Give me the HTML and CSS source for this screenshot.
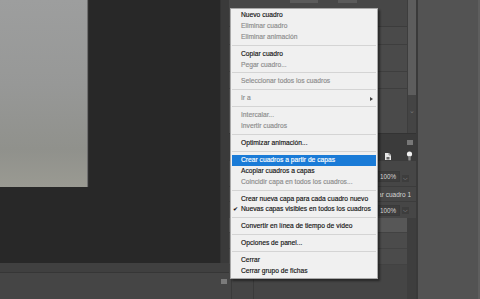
FILE: index.html
```html
<!DOCTYPE html>
<html lang="es">
<head>
    <meta charset="UTF-8">
    <meta name="viewport" content="width=device-width, initial-scale=1.0">
    <title>Línea de tiempo - menú</title>
    <link rel="stylesheet" href="styles.css">
</head>
<body>
    <div class="app">
        <!-- documento -->
        <div class="workspace">
            <div class="main">
                <div class="canvas">
                    <div class="photo"></div>
                </div>
                <div class="gutter"></div>
            </div>
            <div class="statusbar"></div>
            <div class="timeline">
                <span class="tl-square"></span>
            </div>
        </div>

        <!-- paneles -->
        <div class="panel">
            <div class="frames-panel">
                <div class="frames-list">
                    <div class="frames-top">
                        <span class="tab-btn tb1"></span>
                        <span class="tab-btn tb2"></span>
                    </div>
                    <div class="frame-row r1"></div>
                    <div class="frame-row r2"></div>
                    <div class="frame-row r3"></div>
                    <div class="frame-row r4"></div>
                </div>
                <div class="scroll">
                    <div class="scroll-thumb"></div>
                    <div class="scroll-track">
                        <span class="scroll-arrow">⌄</span>
                    </div>
                </div>
            </div>

            <div class="layers-panel">
                <div class="layers-head">
                    <span class="menu-ico"></span>
                    <div class="head-icons">
                        <svg class="ico-lock" width="8" height="9" viewBox="0 0 8 9">
                            <path d="M1 1h4l2 2v5H1z" fill="#e6e6e6"/>
                            <path d="M5 1v2h2" fill="none" stroke="#777" stroke-width="0.8"/>
                            <rect x="2.5" y="5" width="3" height="2.5" fill="#666"/>
                        </svg>
                        <svg class="ico-pin" width="7" height="10" viewBox="0 0 7 10">
                            <circle cx="3.5" cy="3" r="2.6" fill="#f2f2f2"/>
                            <rect x="2.3" y="5" width="2.4" height="4.5" rx="0.6" fill="#8a8a8a"/>
                        </svg>
                    </div>
                </div>
                <div class="opt-row opacity">
                    <span class="pct">100%</span><span class="drop">⌵</span>
                </div>
                <div class="opt-row propagate">
                    <span class="clip">Propagar cuadro 1</span>
                </div>
                <div class="opt-row fill">
                    <span class="pct">100%</span><span class="drop">⌵</span>
                </div>
                <div class="layers-body">
                    <div class="layers-list">
                        <div class="layer-row active"></div>
                        <div class="layer-row"></div>
                        <div class="layer-row"></div>
                    </div>
                    <div class="layers-side"></div>
                </div>
            </div>
        </div>

        <div class="dock"></div>
    </div>

    <!-- menú contextual del panel -->
    <div class="ctx-menu">
        <div class="item">Nuevo cuadro</div>
        <div class="item off">Eliminar cuadro</div>
        <div class="item off">Eliminar animación</div>
        <div class="sep"></div>
        <div class="item">Copiar cuadro</div>
        <div class="item off">Pegar cuadro...</div>
        <div class="sep"></div>
        <div class="item off">Seleccionar todos los cuadros</div>
        <div class="sep"></div>
        <div class="item off sub">Ir a <span class="arrow"></span></div>
        <div class="sep"></div>
        <div class="item off">Intercalar...</div>
        <div class="item off">Invertir cuadros</div>
        <div class="sep"></div>
        <div class="item">Optimizar animación...</div>
        <div class="sep"></div>
        <div class="item hover">Crear cuadros a partir de capas</div>
        <div class="item">Acoplar cuadros a capas</div>
        <div class="item off">Coincidir capa en todos los cuadros...</div>
        <div class="sep"></div>
        <div class="item">Crear nueva capa para cada cuadro nuevo</div>
        <div class="item checked"><span class="check">✔</span>Nuevas capas visibles en todos los cuadros</div>
        <div class="sep"></div>
        <div class="item">Convertir en línea de tiempo de vídeo</div>
        <div class="sep"></div>
        <div class="item">Opciones de panel...</div>
        <div class="sep"></div>
        <div class="item">Cerrar</div>
        <div class="item">Cerrar grupo de fichas</div>
    </div>
</body>
</html>
```

FILE: styles.css
```css
* {
    box-sizing: border-box;
}

body {
    margin: 0;
    width: 480px;
    height: 299px;
    overflow: hidden;
    background: #282828;
    font-family: 'Liberation Sans', Arial, sans-serif;
}

.app {
    display: flex;
    width: 480px;
    height: 299px;
}

/* zona del documento */
.workspace {
    width: 229px;
    display: flex;
    flex-direction: column;
}

.main {
    flex: 1;
    display: flex;
}

.canvas {
    width: 220px;
    background: #282828;
}

.photo {
    width: 88px;
    height: 187px;
    background: linear-gradient(180deg, #9d9e9e 0%, #979897 45%, #90918c 80%, #9a9a92 100%);
    border-right: 1px solid #6f6f6f;
    box-shadow: 1px 0 0 #303030;
}

.gutter {
    flex: 1;
    background: #3a3a3a;
    border-left: 1px solid #333;
}

.statusbar {
    height: 9px;
    background: #404040;
}

.timeline {
    height: 27px;
    background: #454545;
    border-top: 1px solid #363636;
    display: flex;
    justify-content: flex-end;
    padding: 6px 2px 0 0;
}

.tl-square {
    width: 6px;
    height: 5px;
    background: #7a7a7a;
}

/* paneles de la derecha */
.panel {
    width: 187px;
    display: flex;
    flex-direction: column;
    background: #464646;
}

.frames-panel {
    height: 133px;
    display: flex;
}

.frames-list {
    flex: 1;
    display: flex;
    flex-direction: column;
    background: #4a4a4a;
}

.frames-top {
    height: 27px;
    border-bottom: 1px solid #3c3c3c;
    position: relative;
    background: #474747;
}

.tab-btn {
    position: absolute;
    top: 0;
    height: 3px;
    background: #5a5a5a;
}

.tb1 { left: 61px; width: 28px; }
.tb2 { left: 109px; width: 19px; }

.frame-row {
    border-bottom: 1px solid #3e3e3e;
}

.r1 { height: 18px; }
.r2 { height: 27px; }
.r3 { height: 17px; }
.r4 { flex: 1; border-bottom: none; }

.scroll {
    width: 9px;
    display: flex;
    flex-direction: column;
    background: #444;
    border-left: 1px solid #3d3d3d;
}

.scroll-thumb {
    height: 95px;
    background: #5d5d5d;
}

.scroll-track {
    flex: 1;
    display: flex;
    justify-content: center;
    padding-top: 12px;
}

.scroll-arrow {
    color: #777;
    font-size: 7px;
    line-height: 7px;
}

.layers-panel {
    flex: 1;
    display: flex;
    flex-direction: column;
    border-top: 1px solid #333;
}

.layers-head {
    height: 27px;
    background: #3b3b3b;
    display: flex;
    flex-direction: column;
    align-items: flex-end;
    justify-content: space-between;
    padding: 6px 3px 0 0;
}

.menu-ico {
    width: 6px;
    height: 5px;
    background: #777;
}

.head-icons {
    display: flex;
    align-items: flex-end;
    gap: 14px;
}

.opt-row {
    display: flex;
    align-items: center;
    justify-content: flex-end;
    padding-right: 7px;
    border-bottom: 1px solid #3c3c3c;
    color: #d6d6d6;
    font-size: 6.3px;
}

.opacity {
    height: 26px;
    align-items: flex-end;
    padding-bottom: 4px;
}

.propagate {
    height: 15px;
    padding-right: 5px;
}

.fill {
    height: 16px;
    border-bottom: none;
}

.clip {
    width: 31px;
    overflow: hidden;
    white-space: nowrap;
    direction: rtl;
    font-size: 6.5px;
}

.pct {
    background: #3d3d3d;
    padding: 1px 3px;
    border: 1px solid #3a3a3a;
}

.drop {
    width: 7px;
    margin-left: 2px;
    text-align: center;
    color: #aaa;
    background: #3d3d3d;
    font-size: 6px;
}

.layers-body {
    flex: 1;
    display: flex;
}

/* columnas de visibilidad y miniatura */
.layers-list {
    flex: 1;
    display: flex;
    flex-direction: column;
    background:
        linear-gradient(#3a3a3a, #3a3a3a) 2px 0 / 1px 100% no-repeat,
        linear-gradient(#3a3a3a, #3a3a3a) 24px 0 / 1px 100% no-repeat,
        #454545;
}

.layer-row {
    height: 16px;
    border-bottom: 1px solid #424242;
    background: #4b4b4b;
}

.layer-row.active {
    height: 15px;
    background: #575757;
}

.layers-side {
    width: 9px;
    background: #3e3e3e;
}

.dock {
    flex: 1;
    background: #535353;
    border-left: 2px solid #3a3a3a;
    border-right: 2px solid #5e5e5e;
}

/* menú contextual */
.ctx-menu {
    position: absolute;
    left: 230px;
    top: 8px;
    width: 148px;
    padding: 1px;
    background: #f0f0f0;
    border: 1px solid #a8a8a8;
    box-shadow: 2px 2px 2px rgba(0, 0, 0, 0.45);
    font-size: 6.7px;
    color: #141414;
    -webkit-text-stroke: 0.15px currentColor;
}

.item {
    height: 10.9px;
    line-height: 10.9px;
    padding-left: 9px;
    white-space: nowrap;
    position: relative;
}

.item.off {
    color: #8c8c8c;
}

.item.hover {
    background: #1a7bd7;
    color: #fff;
}

.sub {
    display: flex;
    justify-content: space-between;
    align-items: center;
    padding-right: 3px;
}

.arrow {
    width: 0;
    height: 0;
    border-top: 2.5px solid transparent;
    border-bottom: 2.5px solid transparent;
    border-left: 3px solid #444;
}

.check {
    position: absolute;
    left: 1px;
    top: 0;
    font-size: 6px;
    color: #111;
}

.sep {
    height: 1px;
    margin: 2px 0 3px 0;
    background: #d4d4d4;
}
```
